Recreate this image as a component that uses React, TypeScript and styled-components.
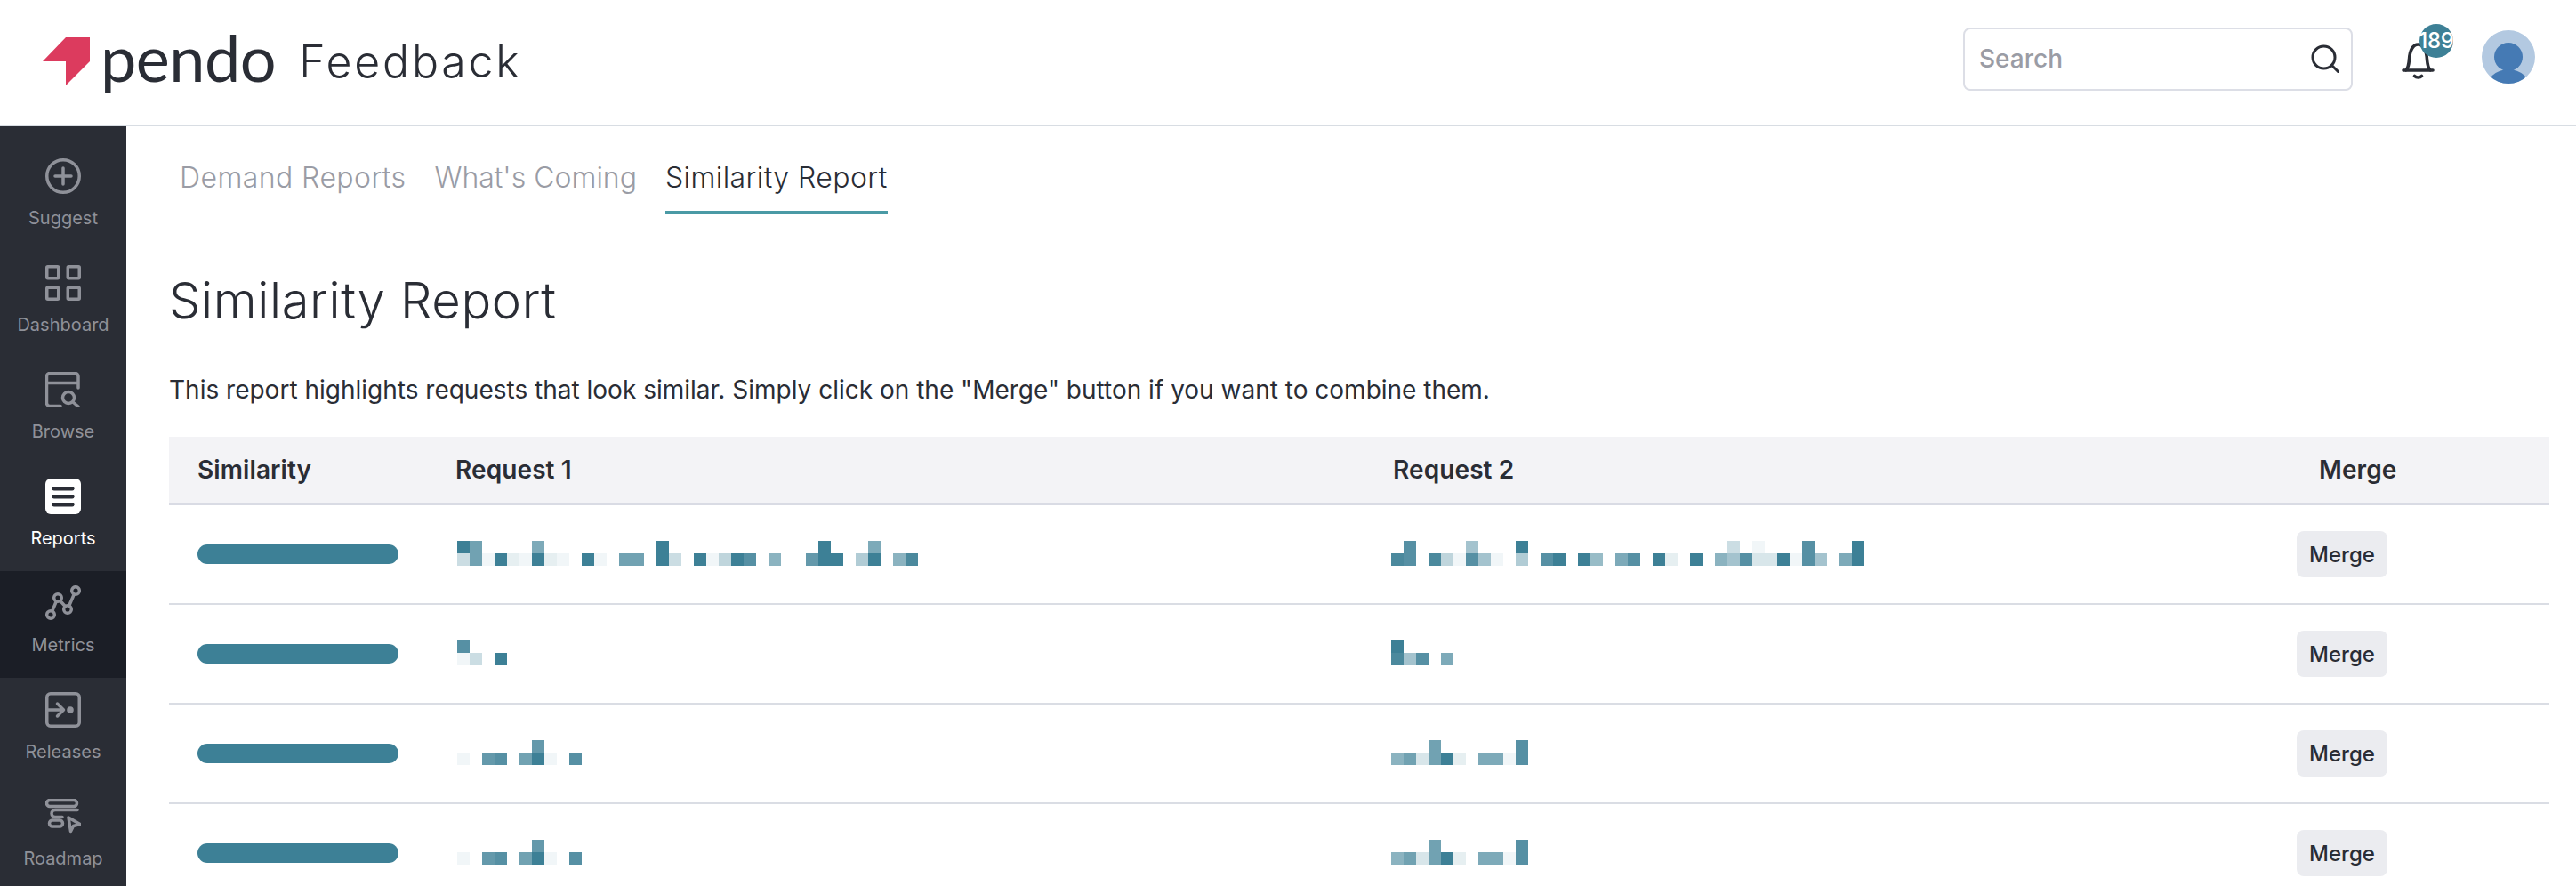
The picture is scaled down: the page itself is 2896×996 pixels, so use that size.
import React from "react";
import styled, { createGlobalStyle } from "styled-components";

const Global = createGlobalStyle`
  html, body { margin: 0; height: 100%; overflow: hidden; background: #fff; }
  #root { height: 100%; }
  * { box-sizing: border-box; }
  body { font-family: Inter, "Liberation Sans", sans-serif; color: #2a2d35; }
`;

const Page = styled.div`
  height: 996px;
  display: flex;
  flex-direction: column;
  overflow: hidden;
`;

const Header = styled.header`
  flex: none;
  height: 142px;
  border-bottom: 2px solid #d8dde3;
  display: flex;
  align-items: center;
  padding: 0 46px 0 48px;
`;

const Brand = styled.div`
  display: flex;
  align-items: center;
  flex: 1;
`;

const LogoMark = styled.svg`
  width: 53px;
  height: 54px;
  margin-top: -2px;
  flex: none;
`;

const Wordmark = styled.span`
  font-family: Lato, sans-serif;
  font-size: 72px;
  line-height: 72px;
  font-weight: 400;
  letter-spacing: -0.5px;
  margin-left: 12px;
  margin-top: -13px;
  color: #2a2d35;
`;

const Product = styled.span`
  font-size: 50px;
  line-height: 60px;
  font-weight: 300;
  letter-spacing: 2.8px;
  margin-left: 26px;
  margin-top: -3px;
  color: #2a2d35;
`;

const SearchBox = styled.div`
  width: 438px;
  height: 71px;
  border: 2px solid #dcdee6;
  border-radius: 8px;
  display: flex;
  align-items: center;
  justify-content: space-between;
  padding: 0 12px 0 16px;
  margin-top: -8px;
`;

const SearchHint = styled.span`
  font-size: 28px;
  font-weight: 500;
  color: #9a9ca5;
`;

const BellWrap = styled.div`
  position: relative;
  width: 37px;
  height: 41px;
  margin-left: 55px;
  margin-top: -4px;
`;

const Badge = styled.span`
  position: absolute;
  left: 20px;
  top: -21px;
  width: 38px;
  height: 38px;
  border-radius: 50%;
  background: #3d8096;
  color: #fff;
  font-size: 24px;
  font-weight: 500;
  letter-spacing: -0.3px;
  display: flex;
  align-items: center;
  justify-content: center;
`;

const Avatar = styled.svg`
  width: 60px;
  height: 60px;
  margin-left: 53px;
  margin-top: -12px;
  border-radius: 50%;
  flex: none;
`;

const Body = styled.div`
  flex: 1;
  display: flex;
  min-height: 0;
`;

const Sidebar = styled.nav`
  flex: none;
  width: 142px;
  background: #2a2d35;
  padding-top: 20px;
`;

const NavItem = styled.div<{ $active?: boolean; $hover?: boolean }>`
  height: 120px;
  padding-top: 16px;
  display: flex;
  flex-direction: column;
  align-items: center;
  background: ${(p) => (p.$hover ? "#1b1e26" : "transparent")};
  color: ${(p) => (p.$active ? "#ffffff" : "#8f9199")};
`;

const NavIcon = styled.svg`
  width: 40px;
  height: 40px;
  fill: none;
  stroke: currentColor;
  stroke-width: 3.5;
  stroke-linecap: round;
  stroke-linejoin: round;
`;

const NavLabel = styled.span`
  font-size: 20px;
  line-height: 24px;
  margin-top: 15px;
`;

const Main = styled.main`
  flex: 1;
  min-width: 0;
  padding: 0 30px 0 48px;
`;

const Tabs = styled.div`
  display: flex;
  gap: 32px;
  height: 99px;
  padding-left: 12px;
`;

const Tab = styled.div<{ $active?: boolean; $tracking: number }>`
  font-size: 32px;
  line-height: 40px;
  letter-spacing: ${(p) => p.$tracking}px;
  padding-top: 38px;
  height: 99px;
  font-weight: 300;
  color: ${(p) => (p.$active ? "#2a2d35" : "#9a9ca5")};
  border-bottom: 4px solid ${(p) => (p.$active ? "#4a9aa5" : "transparent")};
`;

const Title = styled.h1`
  font-size: 56px;
  line-height: 68px;
  font-weight: 300;
  letter-spacing: 0.65px;
  margin: 63px 0 0;
  color: #2a2d35;
`;

const Intro = styled.p`
  font-size: 28px;
  line-height: 40px;
  font-weight: 400;
  margin: 46px 0 0;
  color: #2a2d35;
`;

const Grid = styled.div`
  display: grid;
  grid-template-columns: 292px 1050px 1050px 284px;
  align-items: center;
`;

const TableHead = styled(Grid)`
  margin-top: 33px;
  height: 77px;
  background: #f3f3f6;
  border-bottom: 3px solid #d9dbe4;
`;

const HeadCell = styled.div<{ $inset: number }>`
  font-size: 28px;
  font-weight: 600;
  letter-spacing: 0.1px;
  padding-left: ${(p) => p.$inset}px;
  color: #2a2d35;
`;

const Row = styled(Grid)`
  height: 112px;
  border-bottom: 2px solid #dadde4;
`;

const Cell = styled.div<{ $inset?: number }>`
  padding-left: ${(p) => p.$inset ?? 0}px;
`;

const Bar = styled.div`
  width: 226px;
  height: 22px;
  border-radius: 11px;
  background: #3d8096;
`;

const Censored = styled.div`
  display: flex;
  flex-direction: column;
  margin-top: -2px;
`;

const PixelRow = styled.div`
  display: flex;
`;

const Pixel = styled.span<{ $a: number }>`
  width: 14px;
  height: 14px;
  flex: none;
  background: rgba(61, 128, 150, ${(p) => p.$a});
`;

const MergeButton = styled.button`
  width: 102px;
  height: 52px;
  border: none;
  border-radius: 8px;
  background: #ebecf0;
  color: #2a2d35;
  font-family: inherit;
  font-size: 24px;
  font-weight: 500;
  padding: 0;
`;

function Blur({ top, bottom }: { top: string; bottom: string }) {
  return (
    <Censored>
      {[top, bottom].map((line, i) => (
        <PixelRow key={i}>
          {line.split("").map((c, j) => (
            <Pixel key={j} $a={Math.round((parseInt(c, 16) / 15) * 100) / 100} />
          ))}
        </PixelRow>
      ))}
    </Censored>
  );
}

const rows = [
  {
    a: ["fb0000a000000000f000000000000f000a000", "4b1f21f210f10bb0f40f15fd0900cff06f09e"],
    b: ["0d00007000f00000000000000004" + "01000d000f", "ed0e51d71060df0f80ad0f20f097d33f1d70af"],
  },
  { a: ["d000", "140f"], b: ["f0000", "e7d0a"] },
  { a: ["000000c000", "10cd0bf10d"], b: ["000b000000d", "9b3bf20aa1d"] },
  { a: ["000000c000", "10cd0bf10d"], b: ["000b000000d", "9b3bf20aa1d"] },
];

const nav: { label: string; active?: boolean; hover?: boolean; icon: React.ReactNode }[] = [
  {
    label: "Suggest",
    icon: (
      <>
        <circle cx="20" cy="20" r="18.25" />
        <path d="M20 11v18M11 20h18" />
      </>
    ),
  },
  {
    label: "Dashboard",
    icon: (
      <>
        <rect x="1.75" y="1.75" width="13" height="13" rx="1" />
        <rect x="25.25" y="1.75" width="13" height="13" rx="1" />
        <rect x="1.75" y="25.25" width="13" height="13" rx="1" />
        <rect x="25.25" y="25.25" width="13" height="13" rx="1" />
      </>
    ),
  },
  {
    label: "Browse",
    icon: (
      <>
        <path d="M37 18V5a3.5 3.5 0 0 0-3.5-3.5H5A3.5 3.5 0 0 0 1.5 5v30A3.5 3.5 0 0 0 5 38.500h12M1.500 12.500H37" />
        <circle cx="26" cy="29" r="6.500" />
        <path d="M31 34l6 5" />
      </>
    ),
  },
  {
    label: "Reports",
    active: true,
    icon: (
      <>
        <rect x="0" y="0" width="40" height="40" rx="6" fill="#fff" stroke="none" />
        <rect x="7.500" y="9" width="25" height="4.500" rx="2.250" fill="#2a2d35" stroke="none" />
        <rect x="7.500" y="18" width="25" height="4.500" rx="2.250" fill="#2a2d35" stroke="none" />
        <rect x="7.500" y="27" width="25" height="4.500" rx="2.250" fill="#2a2d35" stroke="none" />
      </>
    ),
  },
  {
    label: "Metrics",
    hover: true,
    icon: (
      <>
        <circle cx="6" cy="33" r="4.300" />
        <circle cx="14" cy="14" r="4.300" />
        <circle cx="25" cy="27" r="4.300" />
        <circle cx="34" cy="6" r="4.300" />
        <path d="M7.700 29l4.600-11M16.800 17.500l5.400 6M26.700 23l5.600-13" />
      </>
    ),
  },
  {
    label: "Releases",
    icon: (
      <>
        <rect x="1.750" y="1.750" width="36.500" height="36.500" rx="4" />
        <path d="M1.750 20H20M13.500 13l7 7-7 7" />
        <circle cx="28" cy="20" r="3.800" fill="currentColor" stroke="none" />
      </>
    ),
  },
  {
    label: "Roadmap",
    icon: (
      <>
        <rect x="1.500" y="1.500" width="34" height="7" rx="3.500" />
        <path d="M36 12.500H11a4 4 0 0 0 0 8h8" />
        <rect x="4.500" y="24" width="15" height="7" rx="3.500" />
        <path d="M26 21l13 7.500-7.500 2-3 6z" />
      </>
    ),
  },
];

export default function App() {
  return (
    <Page>
      <Global />
      <Header>
        <Brand>
          <LogoMark viewBox="0 0 53 54">
            <polygon points="26,0 53,0 53,27 26,54 26,27 0,27" fill="#dc3b5e" />
          </LogoMark>
          <Wordmark>pendo</Wordmark>
          <Product>Feedback</Product>
        </Brand>
        <SearchBox>
          <SearchHint>Search</SearchHint>
          <svg width="34" height="34" viewBox="0 0 34 34" fill="none" stroke="#2a2d35" strokeWidth="3" strokeLinecap="round">
            <circle cx="15.500" cy="15.500" r="12.500" />
            <path d="M24.500 24.500l7 7" />
          </svg>
        </SearchBox>
        <BellWrap>
          <svg width="37" height="41" viewBox="0 0 37 41" fill="none" stroke="#2a2d35" strokeWidth="3.600" strokeLinecap="round" strokeLinejoin="round">
            <path d="M2 31h33M5 31c2.500-3 3-6 3.500-12C9 9 12.500 2 18.500 2S28 9 28.500 19c.5 6 1 9 3.500 12" />
            <path d="M14.500 37.500c2 2 6 2 8 0" />
          </svg>
          <Badge>189</Badge>
        </BellWrap>
        <Avatar viewBox="0 0 60 60">
          <rect width="60" height="60" fill="#b3c9e1" />
          <circle cx="30" cy="30" r="16" fill="#457ab4" />
          <ellipse cx="30" cy="66" rx="25" ry="22" fill="#457ab4" />
        </Avatar>
      </Header>
      <Body>
        <Sidebar>
          {nav.map((n) => (
            <NavItem key={n.label} $active={n.active} $hover={n.hover}>
              <NavIcon viewBox="0 0 40 40">{n.icon}</NavIcon>
              <NavLabel>{n.label}</NavLabel>
            </NavItem>
          ))}
        </Sidebar>
        <Main>
          <Tabs>
            <Tab $tracking={0.42}>Demand Reports</Tab>
            <Tab $tracking={0}>What's Coming</Tab>
            <Tab $active $tracking={0.42}>Similarity Report</Tab>
          </Tabs>
          <Title>Similarity Report</Title>
          <Intro>This report highlights requests that look similar. Simply click on the "Merge" button if you want to combine them.</Intro>
          <TableHead>
            <HeadCell $inset={32}>Similarity</HeadCell>
            <HeadCell $inset={30}>Request 1</HeadCell>
            <HeadCell $inset={34}>Request 2</HeadCell>
            <HeadCell $inset={25}>Merge</HeadCell>
          </TableHead>
          {rows.map((r, i) => (
            <Row key={i}>
              <Cell $inset={32}>
                <Bar />
              </Cell>
              <Cell $inset={32}>
                <Blur top={r.a[0]} bottom={r.a[1]} />
              </Cell>
              <Cell $inset={32}>
                <Blur top={r.b[0]} bottom={r.b[1]} />
              </Cell>
              <Cell>
                <MergeButton>Merge</MergeButton>
              </Cell>
            </Row>
          ))}
        </Main>
      </Body>
    </Page>
  );
}
